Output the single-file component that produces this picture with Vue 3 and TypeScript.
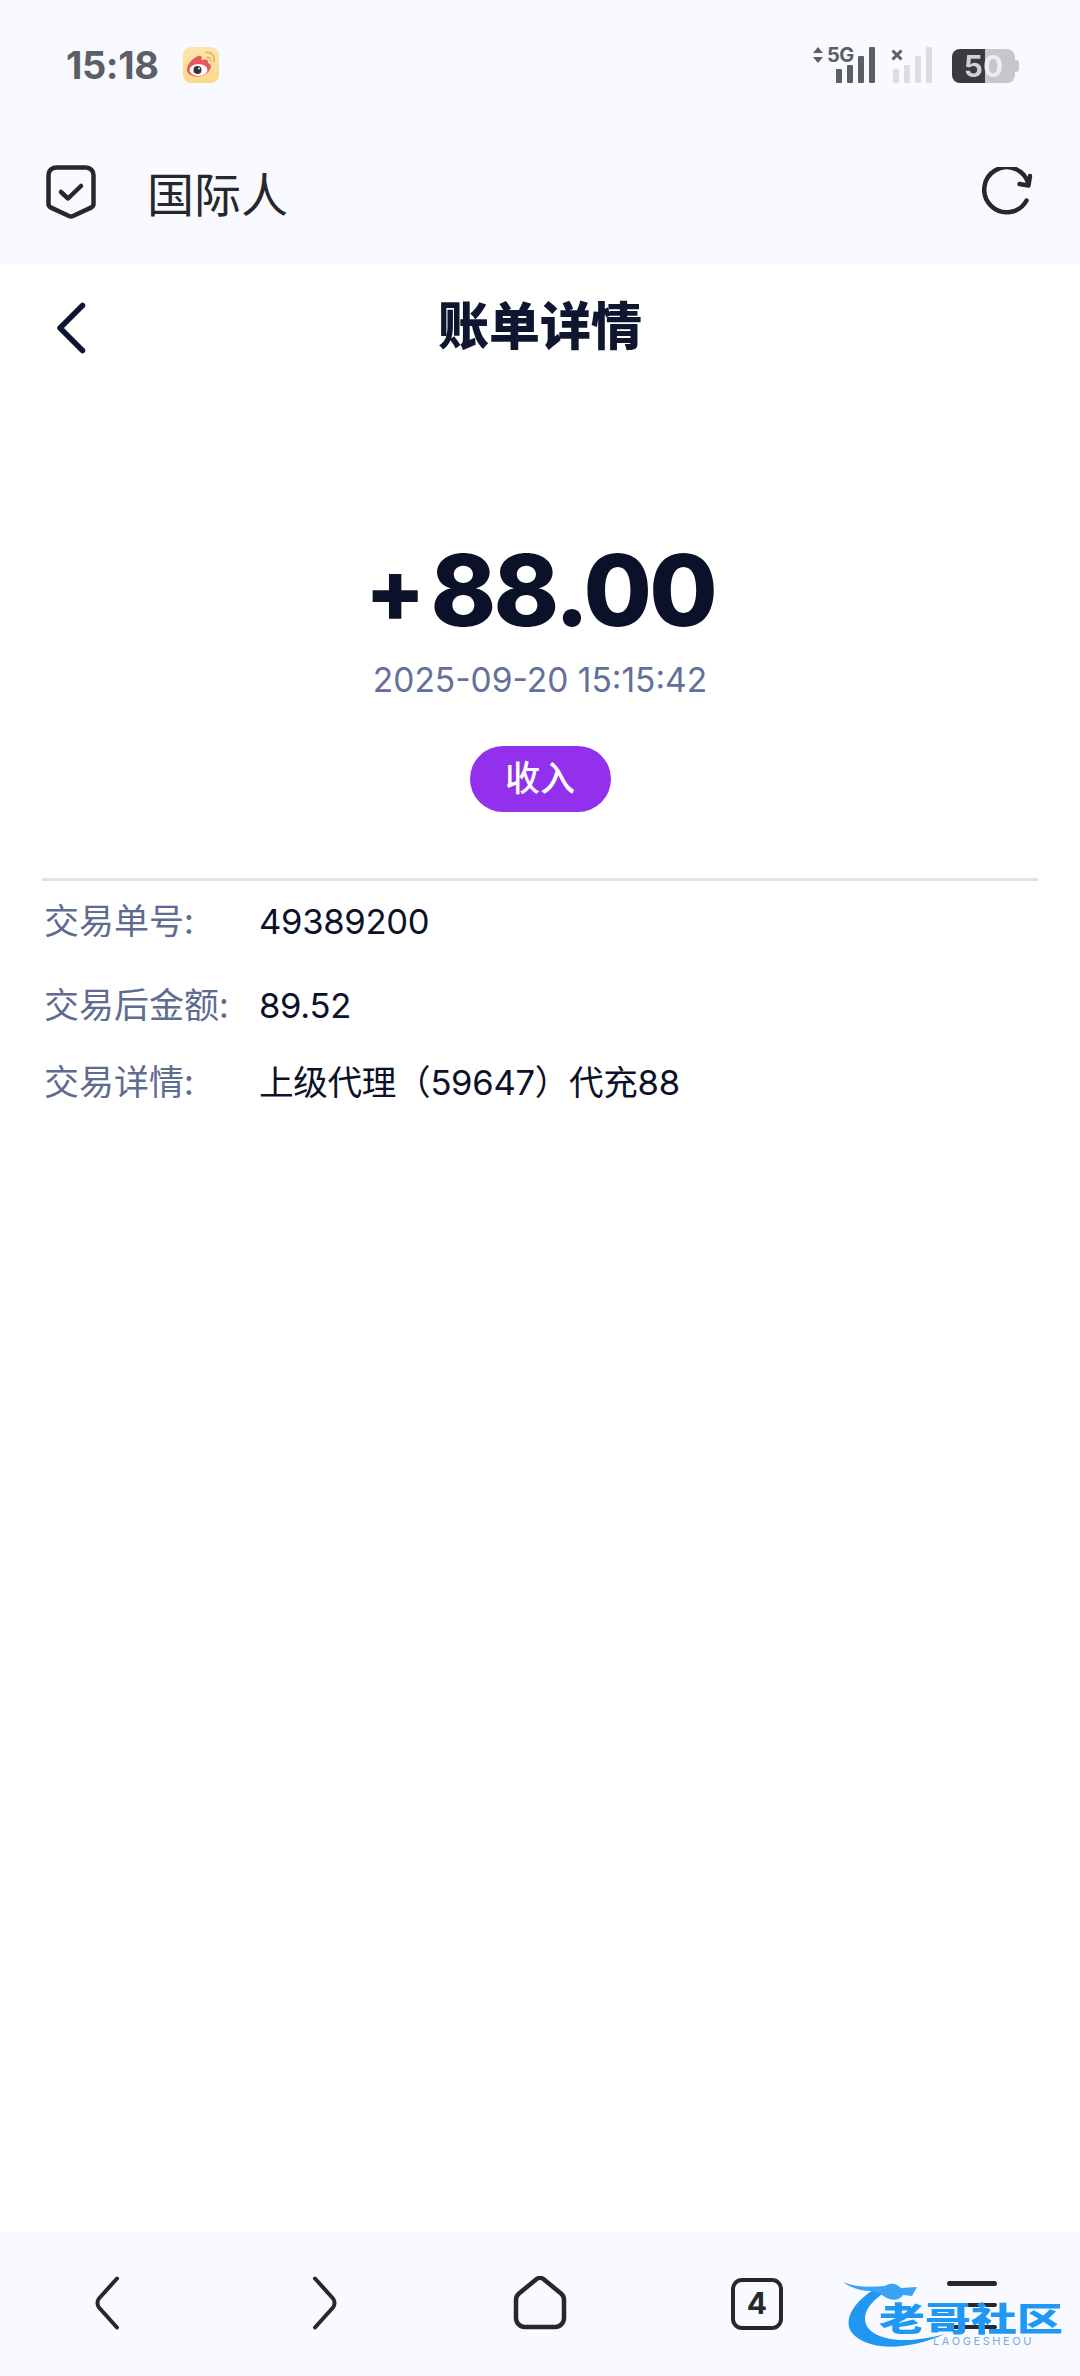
<script setup lang="ts">
interface DetailRow { label: string; value: string; cls: string }
const rows: DetailRow[] = [
  { label: '交易单号:', value: '49389200', cls: 'first' },
  { label: '交易后金额:', value: '89.52', cls: 'second' },
  { label: '交易详情:', value: '上级代理（59647）代充88', cls: 'third' },
]
const signal = [
  { x: 0, y: 22, h: 14 },
  { x: 11, y: 18, h: 18 },
  { x: 22, y: 9, h: 27 },
  { x: 33, y: 0, h: 36 },
]
</script>

<template>
  <div class="page">
    <header class="chrome">
      <div class="status">
        <div class="status-left">
          <span class="time">15:18</span>
          <svg class="weibo" viewBox="0 0 36 36" width="36" height="36">
            <defs>
              <linearGradient id="wb" x1="0" y1="0" x2="0" y2="1">
                <stop offset="0" stop-color="#fbe6b0" />
                <stop offset="1" stop-color="#fbd98a" />
              </linearGradient>
            </defs>
            <rect width="36" height="36" rx="8" fill="url(#wb)" />
            <path d="M4 23c0-6 6-12 11-14 3.500-1 4.500 1.500 3.500 4.500 3-1.500 7-1.500 6.500 2.500 3.500 1 3.500 4 2 6.500-3 5-8 7-12 7-6 0-11-2.500-11-6.500z" fill="#e8555a" />
            <ellipse cx="15.500" cy="23" rx="9" ry="6" fill="#fff" />
            <circle cx="14.500" cy="23" r="4" fill="#3a3030" />
            <circle cx="16" cy="21.500" r="1" fill="#fff" />
            <path d="M23 5.500c5-1 9 3 8 9.500M24 10.500c2.500-.5 4 1 3.500 4" fill="none" stroke="#e9b765" stroke-width="1.800" stroke-linecap="round" />
          </svg>
        </div>
        <div class="status-right">
          <div class="net">
            <svg class="updown" viewBox="0 0 10 16" width="10" height="16">
              <path d="M5 0l5 6H0zM5 16L0 10h10z" fill="#5c5f66" />
            </svg>
            <span class="net-label">5G</span>
            <svg class="bars" viewBox="0 0 39 36" width="39" height="36">
              <rect v-for="b in signal" :key="b.x" :x="b.x" :y="b.y" width="6" :height="b.h" rx="1" fill="#5c5f66" />
            </svg>
          </div>
          <div class="net off">
            <svg class="cross" viewBox="0 0 12 12" width="12" height="12">
              <path d="M1.500 1.500l9 9M10.500 1.500l-9 9" stroke="#5c5f66" stroke-width="3" />
            </svg>
            <svg class="bars" viewBox="0 0 39 36" width="39" height="36">
              <rect v-for="b in signal" :key="b.x" :x="b.x" :y="b.y" width="6" :height="b.h" rx="1" fill="#dcdde0" />
            </svg>
          </div>
          <div class="battery">
            <div class="battery-fill"></div>
            <span class="battery-num">50</span>
            <i class="battery-cap"></i>
          </div>
        </div>
      </div>
      <div class="address">
        <svg class="shield" viewBox="0 0 50 54" width="50" height="54">
          <path d="M10 2.500h30a7.500 7.500 0 0 1 7.500 7.500v29c0 1.500-.8 2.700-2 3.400L27 51a4.500 4.500 0 0 1-4 0L4.500 42.400c-1.200-.7-2-1.900-2-3.400V10A7.500 7.500 0 0 1 10 2.500z" fill="none" stroke="#26282c" stroke-width="4.500" />
          <path d="M15 27l7 6.500L35 21" fill="none" stroke="#26282c" stroke-width="4.500" stroke-linecap="round" stroke-linejoin="round" />
        </svg>
        <span class="site">国际人</span>
        <svg class="reload" viewBox="0 0 52 52" width="52" height="52">
          <path d="M44.500 33.500A22.500 22.500 0 1 1 46.500 17" fill="none" stroke="#26282c" stroke-width="4.500" stroke-linecap="round" />
          <path d="M48 9l-1.500 9.500L37.500 17" fill="none" stroke="#26282c" stroke-width="4.500" stroke-linecap="round" stroke-linejoin="round" />
        </svg>
      </div>
    </header>

    <main class="content">
      <div class="title-row">
        <svg class="back" viewBox="0 0 30 52" width="30" height="52">
          <path d="M26.500 3.500L4 26l22.500 22.500" fill="none" stroke="#0f1630" stroke-width="5.500" stroke-linecap="round" stroke-linejoin="round" />
        </svg>
        <h1 class="title">账单详情</h1>
      </div>

      <section class="hero">
        <div class="amount"><span class="plus">+</span>88.00</div>
        <div class="date">2025-09-20 15:15:42</div>
        <div class="badge">收入</div>
      </section>

      <div class="divider"></div>

      <div v-for="r in rows" :key="r.label" class="row" :class="r.cls">
        <span class="label">{{ r.label }}</span>
        <span class="value">{{ r.value }}</span>
      </div>
    </main>

    <footer class="bottom">
      <svg class="nav-ic left" viewBox="0 0 26 54" width="26" height="54">
        <path d="M23 2.500L5 22.500c-2 2.300-2 6.700 0 9l18 20" fill="none" stroke="#26282c" stroke-width="4" stroke-linecap="round" />
      </svg>
      <svg class="nav-ic right" viewBox="0 0 26 54" width="26" height="54">
        <path d="M3 2.500l18 20c2 2.300 2 6.700 0 9l-18 20" fill="none" stroke="#26282c" stroke-width="4" stroke-linecap="round" />
      </svg>
      <svg class="nav-ic home" viewBox="0 0 54 54" width="54" height="54">
        <path d="M23 3.500L6 17.500A8 8 0 0 0 3 24v18a9 9 0 0 0 9 9h30a9 9 0 0 0 9-9V24a8 8 0 0 0-3-6.500L31 3.500a6 6 0 0 0-8 0z" fill="none" stroke="#26282c" stroke-width="4.500" />
      </svg>
      <div class="tabs">4</div>
      <div class="menu"><i></i><i></i><i></i></div>

      <div class="mark">
        <svg class="dragon" viewBox="0 0 220 70" width="220" height="70">
          <path d="M30 10C8 24-2 44 12 56c18 15 54 14 90-2-34 9-60 8-74-3C16 41 22 24 44 11z" fill="#2196f3" />
          <path d="M0 2c14 6 28 5 42 4 6-4 12-2 16 2l16-1-5 9-9-1c-4 6-12 6-18 2-4-3-8-5-14-6C18 11 8 8 0 2z" fill="#3ba3f5" />
        </svg>
        <span class="mark-cn">老哥社区</span>
        <span class="mark-en">LAOGESHEOU</span>
      </div>
    </footer>
  </div>
</template>

<style>
html, body { margin: 0; background: #fff; }
</style>

<style scoped>
.page {
  width: 1080px;
  height: 2376px;
  display: flex;
  flex-direction: column;
  background: #fff;
  overflow: hidden;
  font-family: Inter, "Noto Sans CJK SC", sans-serif;
}
.chrome { height: 264px; background: #f8faff; flex: none; }
.status {
  height: 130px;
  padding: 0 62px 0 66px;
  display: flex;
  justify-content: space-between;
  box-sizing: border-box;
}
.status-left { display: flex; align-items: flex-start; padding-top: 47px; }
.time {
  font-size: 38px;
  line-height: 36px;
  font-weight: 700;
  color: #5c5f66;
  letter-spacing: -0.4px;
  width: 117px;
}
.status-right { display: flex; align-items: flex-start; padding-top: 47px; }
.net { position: relative; width: 62px; height: 36px; margin-right: 16px; }
.net.off { width: 41px; margin-right: 20px; }
.net .bars { position: absolute; right: 0; top: 0; }
.updown { position: absolute; left: 0; top: 0; }
.net-label {
  position: absolute;
  left: 14px;
  top: -2px;
  font-size: 20px;
  line-height: 20px;
  font-weight: 700;
  color: #5c5f66;
  letter-spacing: -0.5px;
}
.cross { position: absolute; left: 0; top: 2px; }
.battery {
  position: relative;
  width: 63px;
  height: 34px;
  margin-top: 2px;
  margin-right: 3px;
  background: #c6c7ca;
  border-radius: 8px;
}
.battery-fill {
  position: absolute;
  left: 0;
  top: 0;
  bottom: 0;
  width: 33px;
  background: #3a3b3e;
  border-radius: 8px 0 0 8px;
}
.battery-num {
  position: absolute;
  inset: 0;
  text-align: center;
  font-size: 30px;
  line-height: 34px;
  font-weight: 700;
  background: linear-gradient(90deg, #cfd0d2 33px, #eceded 33px);
  -webkit-background-clip: text;
  background-clip: text;
  color: transparent;
}
.battery-cap {
  position: absolute;
  right: -4px;
  top: 11px;
  width: 4px;
  height: 12px;
  background: #c6c7ca;
  border-radius: 0 3px 3px 0;
}
.address {
  height: 134px;
  display: flex;
  align-items: center;
  padding: 0 46px 10px 46px;
  box-sizing: border-box;
  color: #26282c;
}
.shield { flex: none; }
.site {
  margin-left: 51px;
  font-size: 47px;
  line-height: 56px;
  letter-spacing: 0;
  font-family: "Noto Sans CJK SC", sans-serif;
}
.reload { margin-left: auto; position: relative; top: 1px; }

.content { flex: 1; display: flex; flex-direction: column; }
.title-row {
  position: relative;
  height: 122px;
  display: flex;
  align-items: center;
  justify-content: center;
}
.back { position: absolute; left: 56px; top: 38px; }
.title {
  margin: 0 0 5px;
  font-size: 51px;
  font-weight: 900;
  color: #0f1630;
  font-family: "Noto Sans CJK SC", sans-serif;
  line-height: 70px;
}
.hero {
  padding-top: 144px;
  display: flex;
  flex-direction: column;
  align-items: center;
}
.amount {
  height: 120px;
  line-height: 120px;
  font-size: 99px;
  font-weight: 800;
  color: #0a1128;
  letter-spacing: -2.800px;
  display: flex;
  align-items: center;
}
.plus { font-size: 88px; margin-right: 8px; }
.date {
  margin-top: 8px;
  font-size: 33.500px;
  line-height: 44px;
  color: #63709a;
}
.badge {
  margin-top: 44px;
  width: 141px;
  height: 66px;
  box-sizing: border-box;
  border-radius: 33px;
  background: #9330ee;
  color: #fff;
  font-size: 35px;
  font-weight: 500;
  line-height: 60px;
  text-align: center;
  font-family: "Noto Sans CJK SC", sans-serif;
}
.divider {
  margin: 66px 42px 0;
  height: 3px;
  background: #e1e2e8;
}
.row {
  display: flex;
  padding-left: 44px;
  font-size: 34.600px;
  line-height: 44px;
}
.row.first { margin-top: 18px; }
.row.second { margin-top: 40px; }
.row.third { margin-top: 33px; }
.label {
  width: 216px;
  margin-top: -2px;
  font-size: 35px;
  color: #5f6c92;
  font-family: "Noto Sans CJK SC", sans-serif;
  flex: none;
}
.value { color: #0a1128; letter-spacing: -0.3px; margin-left: -1px; }

.bottom {
  position: relative;
  height: 144px;
  flex: none;
  background: #f8faff;
}
.nav-ic { position: absolute; top: 44px; }
.nav-ic.left { left: 94px; }
.nav-ic.right { left: 312px; }
.nav-ic.home { left: 513px; }
.tabs {
  position: absolute;
  left: 731px;
  top: 46px;
  width: 52px;
  height: 52px;
  box-sizing: border-box;
  border: 4.500px solid #26282c;
  border-radius: 11px;
  text-align: center;
  font-size: 30px;
  line-height: 43px;
  font-weight: 700;
  color: #26282c;
}
.menu {
  position: absolute;
  left: 947px;
  top: 49px;
  width: 50px;
  height: 48px;
  display: flex;
  flex-direction: column;
  justify-content: space-between;
}
.menu i { display: block; height: 4.500px; border-radius: 3px; background: #26282c; }
.mark { position: absolute; left: 843px; top: 48px; width: 220px; height: 70px; }
.dragon { position: absolute; left: 0; top: 0; }
.mark-cn {
  position: absolute;
  left: 36px;
  top: 22px;
  font-size: 46px;
  line-height: 30px;
  font-weight: 900;
  white-space: nowrap;
  letter-spacing: 0;
  font-family: "Noto Sans CJK SC", sans-serif;
  transform: scaleY(0.72);
  color: #1e98f4;
}
.mark-en {
  position: absolute;
  left: 90px;
  top: 55px;
  font-size: 11px;
  line-height: 13px;
  letter-spacing: 2.600px;
  color: #7aa9e2;
  white-space: nowrap;
}
</style>
